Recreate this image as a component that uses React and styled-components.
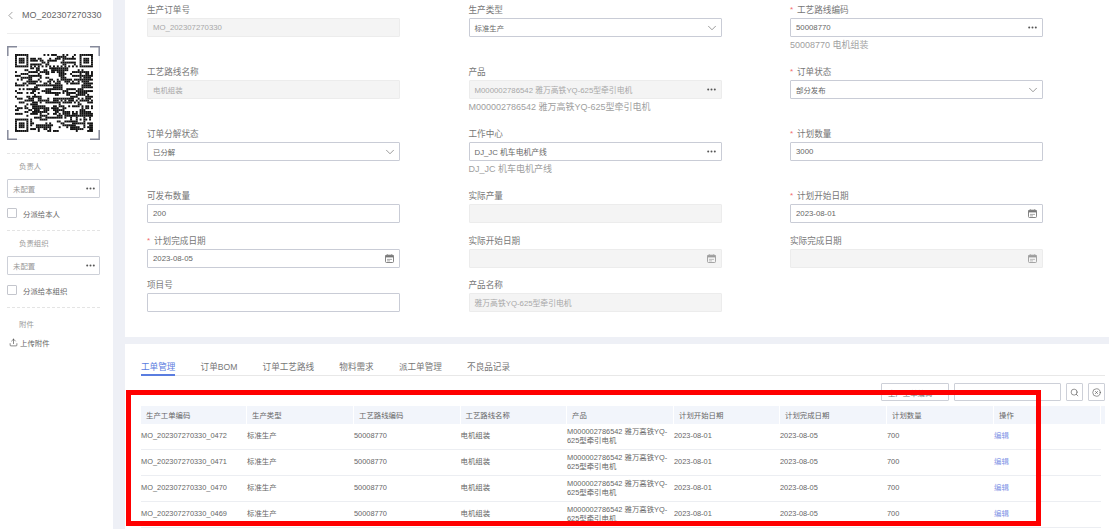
import React from "react";
import styled, { createGlobalStyle } from "styled-components";
import { ChevronDown, ChevronLeft, Search, CircleX, Upload } from "lucide-react";

const GlobalStyle = createGlobalStyle`
  html, body {
    margin: 0;
    padding: 0;
    background: #eef0f6;
    font-family: "Liberation Sans", "Noto Sans CJK SC", sans-serif;
  }
`;

// dense: values with only Chinese text run a little narrower in the reference
const FIELDS = [
  { label: "生产订单号", value: "MO_202307270330", disabled: true },
  { label: "生产类型", value: "标准生产", kind: "select", dense: true },
  { label: "工艺路线编码", value: "50008770", kind: "lookup", required: true, help: "50008770 电机组装" },
  { label: "工艺路线名称", value: "电机组装", disabled: true, dense: true },
  { label: "产品", value: "M000002786542 雅万高铁YQ-625型牵引电机", kind: "lookup", disabled: true, help: "M000002786542 雅万高铁YQ-625型牵引电机" },
  { label: "订单状态", value: "部分发布", kind: "select", required: true, dense: true },
  { label: "订单分解状态", value: "已分解", kind: "select", dense: true },
  { label: "工作中心", value: "DJ_JC 机车电机产线", kind: "lookup", help: "DJ_JC 机车电机产线" },
  { label: "计划数量", value: "3000", required: true },
  { label: "可发布数量", value: "200" },
  { label: "实际产量", value: "", disabled: true },
  { label: "计划开始日期", value: "2023-08-01", kind: "date", required: true },
  { label: "计划完成日期", value: "2023-08-05", kind: "date", required: true },
  { label: "实际开始日期", value: "", kind: "date", disabled: true },
  { label: "实际完成日期", value: "", kind: "date", disabled: true },
  { label: "项目号", value: "" },
  { label: "产品名称", value: "雅万高铁YQ-625型牵引电机", disabled: true },
];

const TABS = ["工单管理", "订单BOM", "订单工艺路线", "物料需求", "派工单管理", "不良品记录"];
const COLUMNS = ["生产工单编码", "生产类型", "工艺路线编码", "工艺路线名称", "产品", "计划开始日期", "计划完成日期", "计划数量", "操作"];
const ORDERS = ["0472", "0471", "0470", "0469"];

// seeded pattern, the code itself is not readable at this size anyway
const QR_SIZE = 41;
const qrModules = () => {
  const cells = [];
  let seed = 20230727;
  const finder = (x, y) => Math.max(Math.abs(x - 3), Math.abs(y - 3)) !== 2;
  for (let y = 0; y < QR_SIZE; y++) {
    let prev = false;
    for (let x = 0; x < QR_SIZE; x++) {
      seed = (seed * 1103515245 + 12345) & 0x7fffffff;
      const roll = (seed >> 16) & 15;
      // neighbours stick together a bit so it reads as blocks, not as noise
      let on = roll < 6 ? prev : roll < 11;
      prev = on;
      const left = x < 8;
      const right = x >= QR_SIZE - 8;
      const top = y < 8;
      const bottom = y >= QR_SIZE - 8;
      if (left && top) on = x < 7 && y < 7 && finder(x, y);
      else if (right && top) on = x > QR_SIZE - 8 && y < 7 && finder(x - (QR_SIZE - 7), y);
      else if (left && bottom) on = x < 7 && y > QR_SIZE - 8 && finder(x, y - (QR_SIZE - 7));
      else if (x === 6 || y === 6) on = (x + y) % 2 === 0;
      else if (x >= 32 && x <= 36 && y >= 32 && y <= 36) {
        on = Math.max(Math.abs(x - 34), Math.abs(y - 34)) !== 1;
      }
      if (on) cells.push([x, y]);
    }
  }
  return cells;
};

const QrCode = () => (
  <QrSvg viewBox="0 0 93 94" width="93" height="94">
    <rect x="0.5" y="0.5" width="92" height="93" fill="#fff" stroke="#f1f3f8" />
    <path d="M0.8 10V0.8H10M83 0.8H92.2V10M0.8 84V93.2H10M83 93.2H92.2V84" fill="none" stroke="#85899a" strokeWidth="1.5" />
    <g transform="translate(8 8) scale(1.9)">
      {qrModules().map(([x, y]) => (
        <rect key={`${x}-${y}`} x={x} y={y} width="1.02" height="1.02" fill="#111" />
      ))}
    </g>
  </QrSvg>
);

const Dots = () => (
  <svg width="9" height="3" viewBox="0 0 9 3">
    <circle cx="1.2" cy="1.5" r="1" fill="#555" />
    <circle cx="4.5" cy="1.5" r="1" fill="#555" />
    <circle cx="7.8" cy="1.5" r="1" fill="#555" />
  </svg>
);

const CalendarIcon = ({ muted }) => (
  <svg width="9" height="9" viewBox="0 0 9 9" opacity={muted ? 0.7 : 1}>
    <rect x="0.5" y="1.2" width="8" height="7.3" rx="1" fill="none" stroke="#777" strokeWidth="0.9" />
    <rect x="0.5" y="1.2" width="8" height="2.2" fill="#777" />
    <path d="M2.5 0.2V1.5M6.5 0.2V1.5M2 5.4H7M2 6.9H5" stroke="#888" strokeWidth="0.7" />
  </svg>
);

const Field = ({ field }) => (
  <FieldWrap>
    <Label>
      {field.required && <Star>*</Star>}
      {field.label}
    </Label>
    <InputBox $disabled={field.disabled}>
      <InputText $dense={field.dense}>{field.value}</InputText>
      {field.kind === "select" && <SelectArrow size={14} strokeWidth={1} color="#555" />}
      {field.kind === "lookup" && <Dots />}
      {field.kind === "date" && <CalendarIcon muted={field.disabled} />}
    </InputBox>
    {field.help && <Help>{field.help}</Help>}
  </FieldWrap>
);

const AssignSection = ({ title, check }) => (
  <Section>
    <SideLabel>{title}</SideLabel>
    <SideInput>
      <span>未配置</span>
      <Dots />
    </SideInput>
    <CheckRow>
      <CheckBox />
      {check}
    </CheckRow>
  </Section>
);

export default function App() {
  return (
    <Page>
      <GlobalStyle />
      <Sidebar>
        <SideTitle>
          <ChevronLeft size={13} strokeWidth={1.1} color="#666" />
          <span>MO_202307270330</span>
        </SideTitle>
        <QrCode />
        <Spacer />
        <AssignSection title="负责人" check="分派给本人" />
        <AssignSection title="负责组织" check="分派给本组织" />
        <Section>
          <SideLabel $tall>附件</SideLabel>
          <UploadRow>
            <Upload size={9} strokeWidth={1.5} color="#333" />
            上传附件
          </UploadRow>
        </Section>
      </Sidebar>
      <Main>
        <FormPanel>
          {FIELDS.map((field) => (
            <Field key={field.label} field={field} />
          ))}
        </FormPanel>
        <ListPanel>
          <TabBar>
            {TABS.map((tab, i) => (
              <Tab key={tab} $active={i === 0}>
                {tab}
              </Tab>
            ))}
          </TabBar>
          <Toolbar>
            <ToolSelect>
              <span>生产工单编码</span>
              <ChevronDown size={9} strokeWidth={1.2} color="#888" />
            </ToolSelect>
            <ToolInput />
            <ToolButton>
              <Search size={9} strokeWidth={1.5} color="#444" />
            </ToolButton>
            <ToolButton>
              <CircleX size={9} strokeWidth={1.5} color="#444" />
            </ToolButton>
          </Toolbar>
          <HeaderRow>
            {COLUMNS.map((col) => (
              <HeaderCell key={col}>{col}</HeaderCell>
            ))}
            <HeaderCell />
          </HeaderRow>
          {ORDERS.map((no) => (
            <Row key={no}>
              <Cell>MO_202307270330_{no}</Cell>
              <Cell>标准生产</Cell>
              <Cell>50008770</Cell>
              <Cell>电机组装</Cell>
              <Cell>
                M000002786542 雅万高铁YQ-
                <br />
                625型牵引电机
              </Cell>
              <Cell>2023-08-01</Cell>
              <Cell>2023-08-05</Cell>
              <Cell>700</Cell>
              <EditLink>编辑</EditLink>
            </Row>
          ))}
        </ListPanel>
      </Main>
      <RedFrame />
    </Page>
  );
}

const Page = styled.div`
  position: relative;
  display: flex;
  width: 1109px;
  height: 529px;
  overflow: hidden;
  background: #eef0f6;
`;

const Sidebar = styled.aside`
  flex: none;
  width: 113px;
  box-sizing: border-box;
  padding: 0 13px 0 7px;
  background: #fff;
`;

const SideTitle = styled.div`
  display: flex;
  align-items: center;
  gap: 5px;
  height: 30px;
  margin-bottom: 12px;
  padding-bottom: 3px;
  border-bottom: 1px solid #eeeeee;
  font-size: 9px;
  white-space: nowrap;
  color: #666;

  svg {
    flex: none;
    margin-left: -3px;
  }
`;

const QrSvg = styled.svg`
  display: block;
`;

const Spacer = styled.div`
  height: 13px;
`;

const Section = styled.section`
  height: 77px;
  box-sizing: border-box;
  border-top: 1px dashed #e4e4e4;
`;

const SideLabel = styled.div`
  display: flex;
  align-items: center;
  height: ${({ $tall }) => ($tall ? "26px" : "25px")};
  box-sizing: border-box;
  padding: ${({ $tall }) => ($tall ? "5px 0 0 12px" : "0 0 2px 12px")};
  font-size: 7.4px;
  color: #999;
`;

const SideInput = styled.div`
  display: flex;
  align-items: center;
  justify-content: space-between;
  height: 19px;
  box-sizing: border-box;
  padding: 0 4px 0 5px;
  border: 1px solid #cdd0d8;
  border-radius: 1px;
  font-size: 7.4px;
  color: #999;
`;

const CheckRow = styled.label`
  display: flex;
  align-items: center;
  gap: 6px;
  height: 10px;
  margin-top: 10px;
  font-size: 7.4px;
  color: #666;
`;

const CheckBox = styled.span`
  width: 10px;
  height: 10px;
  box-sizing: border-box;
  border: 1px solid #c4c6cd;
  border-radius: 1px;
`;

const UploadRow = styled.div`
  display: flex;
  align-items: center;
  gap: 2px;
  height: 8px;
  padding: 4px 0 4px 2px;
  font-size: 7.4px;
  color: #666;
`;

const Main = styled.main`
  flex: 1;
  min-width: 0;
  margin-left: 12px;
`;

const FormPanel = styled.div`
  display: grid;
  grid-template-columns: repeat(3, 253px);
  grid-template-rows: 62px 62px 62px 45px 44px 44px;
  column-gap: 68.5px;
  height: 335px;
  padding: 2px 0 0 22px;
  background: #fff;
`;

const FieldWrap = styled.div`
  min-width: 0;
`;

const Label = styled.div`
  display: flex;
  align-items: center;
  height: 16px;
  padding-bottom: 2px;
  box-sizing: border-box;
  font-size: 8.6px;
  color: #777;
`;

const Star = styled.span`
  width: 7px;
  color: #f26d6d;
  font-size: 8px;
`;

const InputBox = styled.div`
  display: flex;
  align-items: center;
  justify-content: space-between;
  height: 19px;
  box-sizing: border-box;
  padding: 0 5px;
  border: 1px solid ${({ $disabled }) => ($disabled ? "#ececec" : "#c9ccd6")};
  border-radius: 1px;
  background: ${({ $disabled }) => ($disabled ? "#f4f4f4" : "#fff")};
  color: ${({ $disabled }) => ($disabled ? "#a8a8a8" : "#666")};
`;

const InputText = styled.span`
  font-size: ${({ $dense }) => ($dense ? "7.4px" : "7.8px")};
`;

const SelectArrow = styled(ChevronDown)`
  margin-right: -3px;
`;

const Help = styled.div`
  height: 16px;
  line-height: 16px;
  font-size: 9px;
  color: #a0a0a0;
`;

const ListPanel = styled.div`
  height: 185px;
  margin-top: 7px;
  padding: 0 4px 0 16px;
  box-sizing: border-box;
  background: #fff;
  overflow: hidden;
`;

const TabBar = styled.div`
  display: flex;
  gap: 25.2px;
  height: 31px;
  border-bottom: 1px solid #e8e8e8;
`;

const Tab = styled.div`
  display: flex;
  align-items: center;
  height: 32px;
  padding-top: 13px;
  box-sizing: border-box;
  font-size: 8.6px;
  color: ${({ $active }) => ($active ? "#5a7de0" : "#777")};
  border-bottom: 2px solid ${({ $active }) => ($active ? "#5a7de0" : "transparent")};
`;

const Toolbar = styled.div`
  display: flex;
  justify-content: flex-end;
  gap: 5px;
  height: 18px;
  margin: 7px 0 5px;
`;

const ToolSelect = styled.div`
  display: flex;
  align-items: center;
  justify-content: space-between;
  width: 68px;
  box-sizing: border-box;
  padding: 0 6px;
  border: 1px solid #cdd0d8;
  border-radius: 1px;
  font-size: 7.4px;
  color: #777;
`;

const ToolInput = styled.div`
  width: 107px;
  box-sizing: border-box;
  border: 1px solid #cdd0d8;
  border-radius: 1px;
`;

const ToolButton = styled.button`
  display: flex;
  align-items: center;
  justify-content: center;
  width: 17px;
  padding: 0;
  background: #fff;
  border: 1px solid #cdd0d8;
  border-radius: 1px;
`;

const HeaderRow = styled.div`
  display: grid;
  grid-template-columns: 106px 107px 106.5px 106.5px 107px 106px 107px 107px 107px 4px;
  height: 18px;
  background: #f2f5fb;
`;

const HeaderCell = styled.div`
  display: flex;
  align-items: center;
  padding: 0 0 1px 5px;
  box-sizing: border-box;
  border-right: 1px solid #fff;
  font-size: 7.4px;
  color: #666;
  overflow: hidden;
`;

const Row = styled.div`
  display: grid;
  grid-template-columns: 106px 107px 106.5px 106.5px 107px 106px 107px 107px 107px;
  width: 960px;
  height: 26px;
  box-sizing: border-box;
  border-bottom: 1px solid #eceef2;
`;

const Cell = styled.div`
  align-self: center;
  font-size: 7.4px;
  line-height: 8.7px;
  color: #666;
  white-space: nowrap;
`;

const EditLink = styled(Cell)`
  color: #7f94e6;
`;

const RedFrame = styled.div`
  position: absolute;
  left: 126px;
  top: 390px;
  width: 915px;
  height: 136px;
  box-sizing: border-box;
  border: 5.5px solid #ff0000;
  pointer-events: none;
`;
